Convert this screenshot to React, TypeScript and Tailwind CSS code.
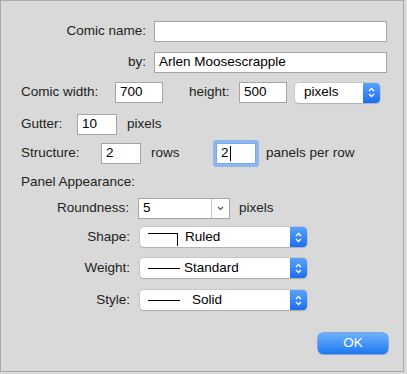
import type { ReactNode } from "react";

const FONT = { fontFamily: '"Liberation Sans", Arial, sans-serif' };

function Field({ value, width, focused }: { value: string; width: string; focused?: boolean }) {
  return (
    <div
      className={`flex h-[21px] items-center border bg-white pl-[4px] text-[13.5px] text-black ${width} ${
        focused ? "rounded-[1px] border-[#7aa7e6] shadow-[0_0_0_3px_#8db8ef]" : "border-[#a6a6a6]"
      }`}
    >
      {value}
      {focused && <span className="ml-[1px] h-[15px] w-px bg-black" />}
    </div>
  );
}

function Stepper() {
  return (
    <div className="flex h-full w-[17px] items-center justify-center rounded-r-[4px] bg-gradient-to-b from-[#58a2fa] to-[#1b6df0]">
      <svg width="7" height="11" viewBox="0 0 7 11" fill="none" stroke="white" strokeWidth="1.3">
        <path d="M1 4 L3.5 1.5 L6 4" />
        <path d="M1 7 L3.5 9.5 L6 7" />
      </svg>
    </div>
  );
}

function Popup({ width, children }: { width: string; children: ReactNode }) {
  return (
    <div
      className={`flex h-[20px] items-center rounded-[4px] bg-white text-[13.5px] text-black shadow-[0_0_0_0.5px_#b5b5b5,0_1px_1px_rgba(0,0,0,0.2)] ${width}`}
    >
      <div className="flex flex-1 items-center">{children}</div>
      <Stepper />
    </div>
  );
}

function Label({ children, className = "" }: { children: ReactNode; className?: string }) {
  return <div className={`whitespace-nowrap text-[13.5px] text-[#222] ${className}`}>{children}</div>;
}

export default function App() {
  return (
    <div className="h-[374px] w-[407px] bg-[#dadada]" style={FONT}>
      <div className="flex h-[372px] w-[404px] flex-col border border-[#a9a9a9] bg-[#d9d9d9] pt-[20px]">
        {/* name + author */}
        <div className="flex h-[21px] items-center">
          <Label className="w-[145px] text-right">Comic name:</Label>
          <div className="ml-[8px]">
            <Field value="" width="w-[233px]" />
          </div>
        </div>
        <div className="mt-[10px] flex h-[21px] items-center">
          <Label className="w-[145px] text-right">by:</Label>
          <div className="ml-[8px]">
            <Field value="Arlen Moosescrapple" width="w-[233px]" />
          </div>
        </div>

        {/* size */}
        <div className="mt-[9px] flex h-[21px] items-center pl-[20px]">
          <Label className="w-[94px]">Comic width:</Label>
          <Field value="700" width="w-[48px]" />
          <Label className="ml-[26px] w-[50px]">height:</Label>
          <Field value="500" width="w-[48px]" />
          <div className="ml-[8px]">
            <Popup width="w-[85px]">
              <span className="pl-[9px]">pixels</span>
            </Popup>
          </div>
        </div>

        <div className="mt-[11px] flex h-[21px] items-center pl-[20px]">
          <Label className="w-[56px]">Gutter:</Label>
          <Field value="10" width="w-[40px]" />
          <Label className="ml-[10px]">pixels</Label>
        </div>

        <div className="mt-[8px] flex h-[21px] items-center pl-[20px]">
          <Label className="w-[80px]">Structure:</Label>
          <Field value="2" width="w-[40px]" />
          <Label className="ml-[10px] w-[65px]">rows</Label>
          <Field value="2" width="w-[40px]" focused />
          <Label className="ml-[10px]">panels per row</Label>
        </div>

        <div className="mt-[9px] flex h-[18px] items-center pl-[20px]">
          <Label>Panel Appearance:</Label>
        </div>

        {/* panel appearance */}
        <div className="mt-[7px] flex h-[21px] items-center">
          <Label className="w-[128px] text-right">Roundness:</Label>
          <div className="ml-[9px] flex h-[21px] w-[92px] border border-[#a6a6a6] bg-white text-[13.5px] text-black">
            <div className="flex flex-1 items-center pl-[4px]">5</div>
            <div className="flex w-[18px] items-center justify-center border-l border-[#c4c4c4]">
              <svg width="7" height="5" viewBox="0 0 7 5" fill="none" stroke="#555" strokeWidth="1.2">
                <path d="M1 1 L3.5 3.5 L6 1" />
              </svg>
            </div>
          </div>
          <Label className="ml-[9px]">pixels</Label>
        </div>

        <div className="mt-[8px] flex h-[20px] items-center">
          <Label className="w-[129px] text-right">Shape:</Label>
          <div className="ml-[10px]">
            <Popup width="w-[167px]">
              <div className="ml-[8px] mt-[6px] h-[13px] w-[30px] self-start border-r border-t border-black" />
              <span className="ml-[7px]">Ruled</span>
            </Popup>
          </div>
        </div>

        <div className="mt-[11px] flex h-[20px] items-center">
          <Label className="w-[129px] text-right">Weight:</Label>
          <div className="ml-[10px]">
            <Popup width="w-[167px]">
              <div className="ml-[8px] h-px w-[32px] bg-black" />
              <span className="ml-[4px]">Standard</span>
            </Popup>
          </div>
        </div>

        <div className="mt-[12px] flex h-[20px] items-center">
          <Label className="w-[129px] text-right">Style:</Label>
          <div className="ml-[10px]">
            <Popup width="w-[167px]">
              <div className="ml-[8px] h-px w-[32px] bg-black" />
              <span className="ml-[12px]">Solid</span>
            </Popup>
          </div>
        </div>

        <div className="mt-[23px] flex justify-end pr-[15px]">
          <button
            type="button"
            className="flex h-[21px] w-[70px] items-center justify-center rounded-[5px] bg-gradient-to-b from-[#69b1fb] to-[#1c77f1] text-[13.5px] text-white shadow-[0_0_0_0.5px_#2c74d8]"
          >
            OK
          </button>
        </div>
      </div>
    </div>
  );
}
